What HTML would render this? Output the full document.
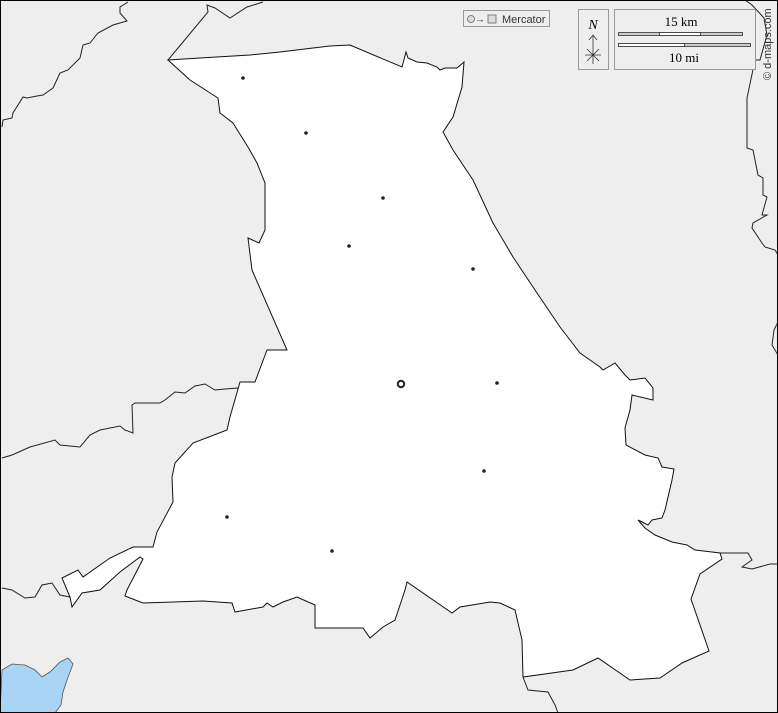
<!DOCTYPE html>
<html><head><meta charset="utf-8"><style>
html,body{margin:0;padding:0;background:#eee;}
svg{display:block;}
</style></head><body>
<svg width="778" height="713" viewBox="0 0 778 713" xmlns="http://www.w3.org/2000/svg" font-family="Liberation Serif, serif">
<rect x="0" y="0" width="778" height="713" fill="#eeeeee"/>
<path d="M2,670 L12,664 L25,665 L35,670 L42,677 L50,672 L60,662 L68,658 L73,664 L67,680 L63,692 L61,705 L55,713 L0,713 Z" fill="#a8d4f5" stroke="#555" stroke-width="0.8"/>
<g fill="none" stroke="#222" stroke-width="1">
<path d="M128,2 L120,7 L120,13 L127,21 L113,25 L98,33 L90,43 L83,45 L80,58 L68,70 L60,73 L53,88 L43,95 L37,96 L27,98 L23,97 L13,113 L12,118 L3,120 L2,127"/>
<path d="M168,60 L208,12 L207,5 L215,8 L230,18 L247,7 L263,2"/>
<path d="M2,458 L12,455 L30,447 L55,440 L60,445 L80,447 L90,435 L100,430 L120,426 L125,430 L133,433 L132,405 L135,403 L160,403 L165,400 L175,392 L185,393 L195,386 L205,384 L215,390 L225,389 L238,388"/>
<path d="M2,588 L12,590 L25,598 L35,597 L42,585 L52,583 L60,595 L70,597"/>
<path d="M745,0 L752,5 L764,18 L767,35 L760,60 L755,60 L747,98 L747,148 L753,150 L758,175 L763,178 L763,195 L767,197 L762,215 L767,215 L753,223 L752,228 L762,243 L765,247 L775,250 L778,255"/>
<path d="M778,322 L774,330 L772,345 L778,355"/>
<path d="M720,553 L748,553 L752,560 L742,567 L752,569 L770,564 L778,564"/>
<path d="M523,677 L528,690 L548,692 L555,705 L558,713"/>
</g>
<path d="M168,60 L200,58 L250,55 L280,52 L313,48 L330,46 L350,45 L402,67 L406,52 L408,58 L417,62 L427,63 L437,67 L440,70 L445,68 L457,68 L464,62 L462,87 L453,117 L443,132 L453,150 L473,180 L493,223 L513,257 L537,293 L560,327 L580,353 L600,367 L603,370 L615,363 L625,375 L630,380 L645,378 L653,388 L653,400 L632,395 L630,410 L625,428 L626,445 L645,455 L658,458 L662,467 L674,469 L672,480 L665,510 L662,518 L652,520 L648,525 L638,520 L645,528 L655,535 L672,542 L687,545 L695,550 L712,552 L720,553 L722,559 L700,574 L691,599 L709,651 L682,663 L660,678 L630,680 L598,658 L573,670 L523,677 L522,640 L515,610 L500,603 L490,602 L460,607 L452,613 L407,582 L405,590 L395,620 L383,627 L370,638 L363,628 L315,628 L315,605 L297,597 L283,602 L273,607 L267,603 L263,607 L235,612 L232,603 L203,601 L143,603 L125,596 L127,590 L143,559 L140,557 L120,572 L100,590 L82,593 L72,607 L70,597 L62,578 L78,570 L83,577 L110,558 L133,547 L153,547 L157,532 L173,502 L172,477 L175,463 L193,443 L227,430 L230,417 L240,382 L255,382 L267,350 L287,350 L252,270 L248,238 L259,243 L265,230 L265,183 L257,163 L248,147 L233,123 L220,113 L218,98 L190,80 Z" fill="#fff" stroke="#111" stroke-width="1"/>
<g fill="#222">
<circle cx="243" cy="78" r="1.8"/><circle cx="306" cy="133" r="1.8"/><circle cx="383" cy="198" r="1.8"/>
<circle cx="349" cy="246" r="1.8"/><circle cx="473" cy="269" r="1.8"/><circle cx="497" cy="383" r="1.8"/>
<circle cx="484" cy="471" r="1.8"/><circle cx="227" cy="517" r="1.8"/><circle cx="332" cy="551" r="1.8"/>
</g>
<circle cx="401" cy="384" r="3.2" fill="none" stroke="#222" stroke-width="2"/>
<rect x="463.5" y="10.5" width="86" height="16" fill="#eee" stroke="#999"/>
<circle cx="471" cy="19" r="3.5" fill="#ddd" stroke="#666" stroke-width="0.8"/>
<text x="475" y="22.5" font-family="Liberation Sans, sans-serif" font-size="10" fill="#333">→</text>
<rect x="488" y="15" width="8" height="8" fill="#ddd" stroke="#666" stroke-width="0.8"/>
<text x="502" y="23" font-family="Liberation Sans, sans-serif" font-size="11" fill="#333">Mercator</text>
<rect x="578.5" y="9.5" width="30" height="60" fill="#eee" stroke="#999"/>
<text x="593" y="29" text-anchor="middle" font-size="14" font-style="italic">N</text>
<path d="M593,36 L593,64 M589,40 L593,35 L597,40 M585,55 L601,55 M587,49 L599,61 M599,49 L587,61" stroke="#333" stroke-width="0.8" fill="none"/>
<rect x="614.5" y="9.5" width="141" height="60" fill="#eee" stroke="#999"/>
<text x="681" y="26" text-anchor="middle" font-size="13">15 km</text>
<rect x="618.5" y="32.5" width="124" height="3" fill="#ccc" stroke="#333" stroke-width="0.8"/>
<rect x="659.5" y="32.5" width="41" height="3" fill="#fff" stroke="#333" stroke-width="0.8"/>
<rect x="618.5" y="43.5" width="132" height="3" fill="#ccc" stroke="#333" stroke-width="0.8"/>
<rect x="618.5" y="43.5" width="66" height="3" fill="#fff" stroke="#333" stroke-width="0.8"/>
<text x="684" y="62" text-anchor="middle" font-size="13">10 mi</text>
<text transform="translate(771,80) rotate(-90)" font-family="Liberation Sans, sans-serif" font-size="11" fill="#333">© d-maps.com</text>
<rect x="0.5" y="0.5" width="777" height="712" fill="none" stroke="#000" stroke-width="1"/>
</svg>
</body></html>
